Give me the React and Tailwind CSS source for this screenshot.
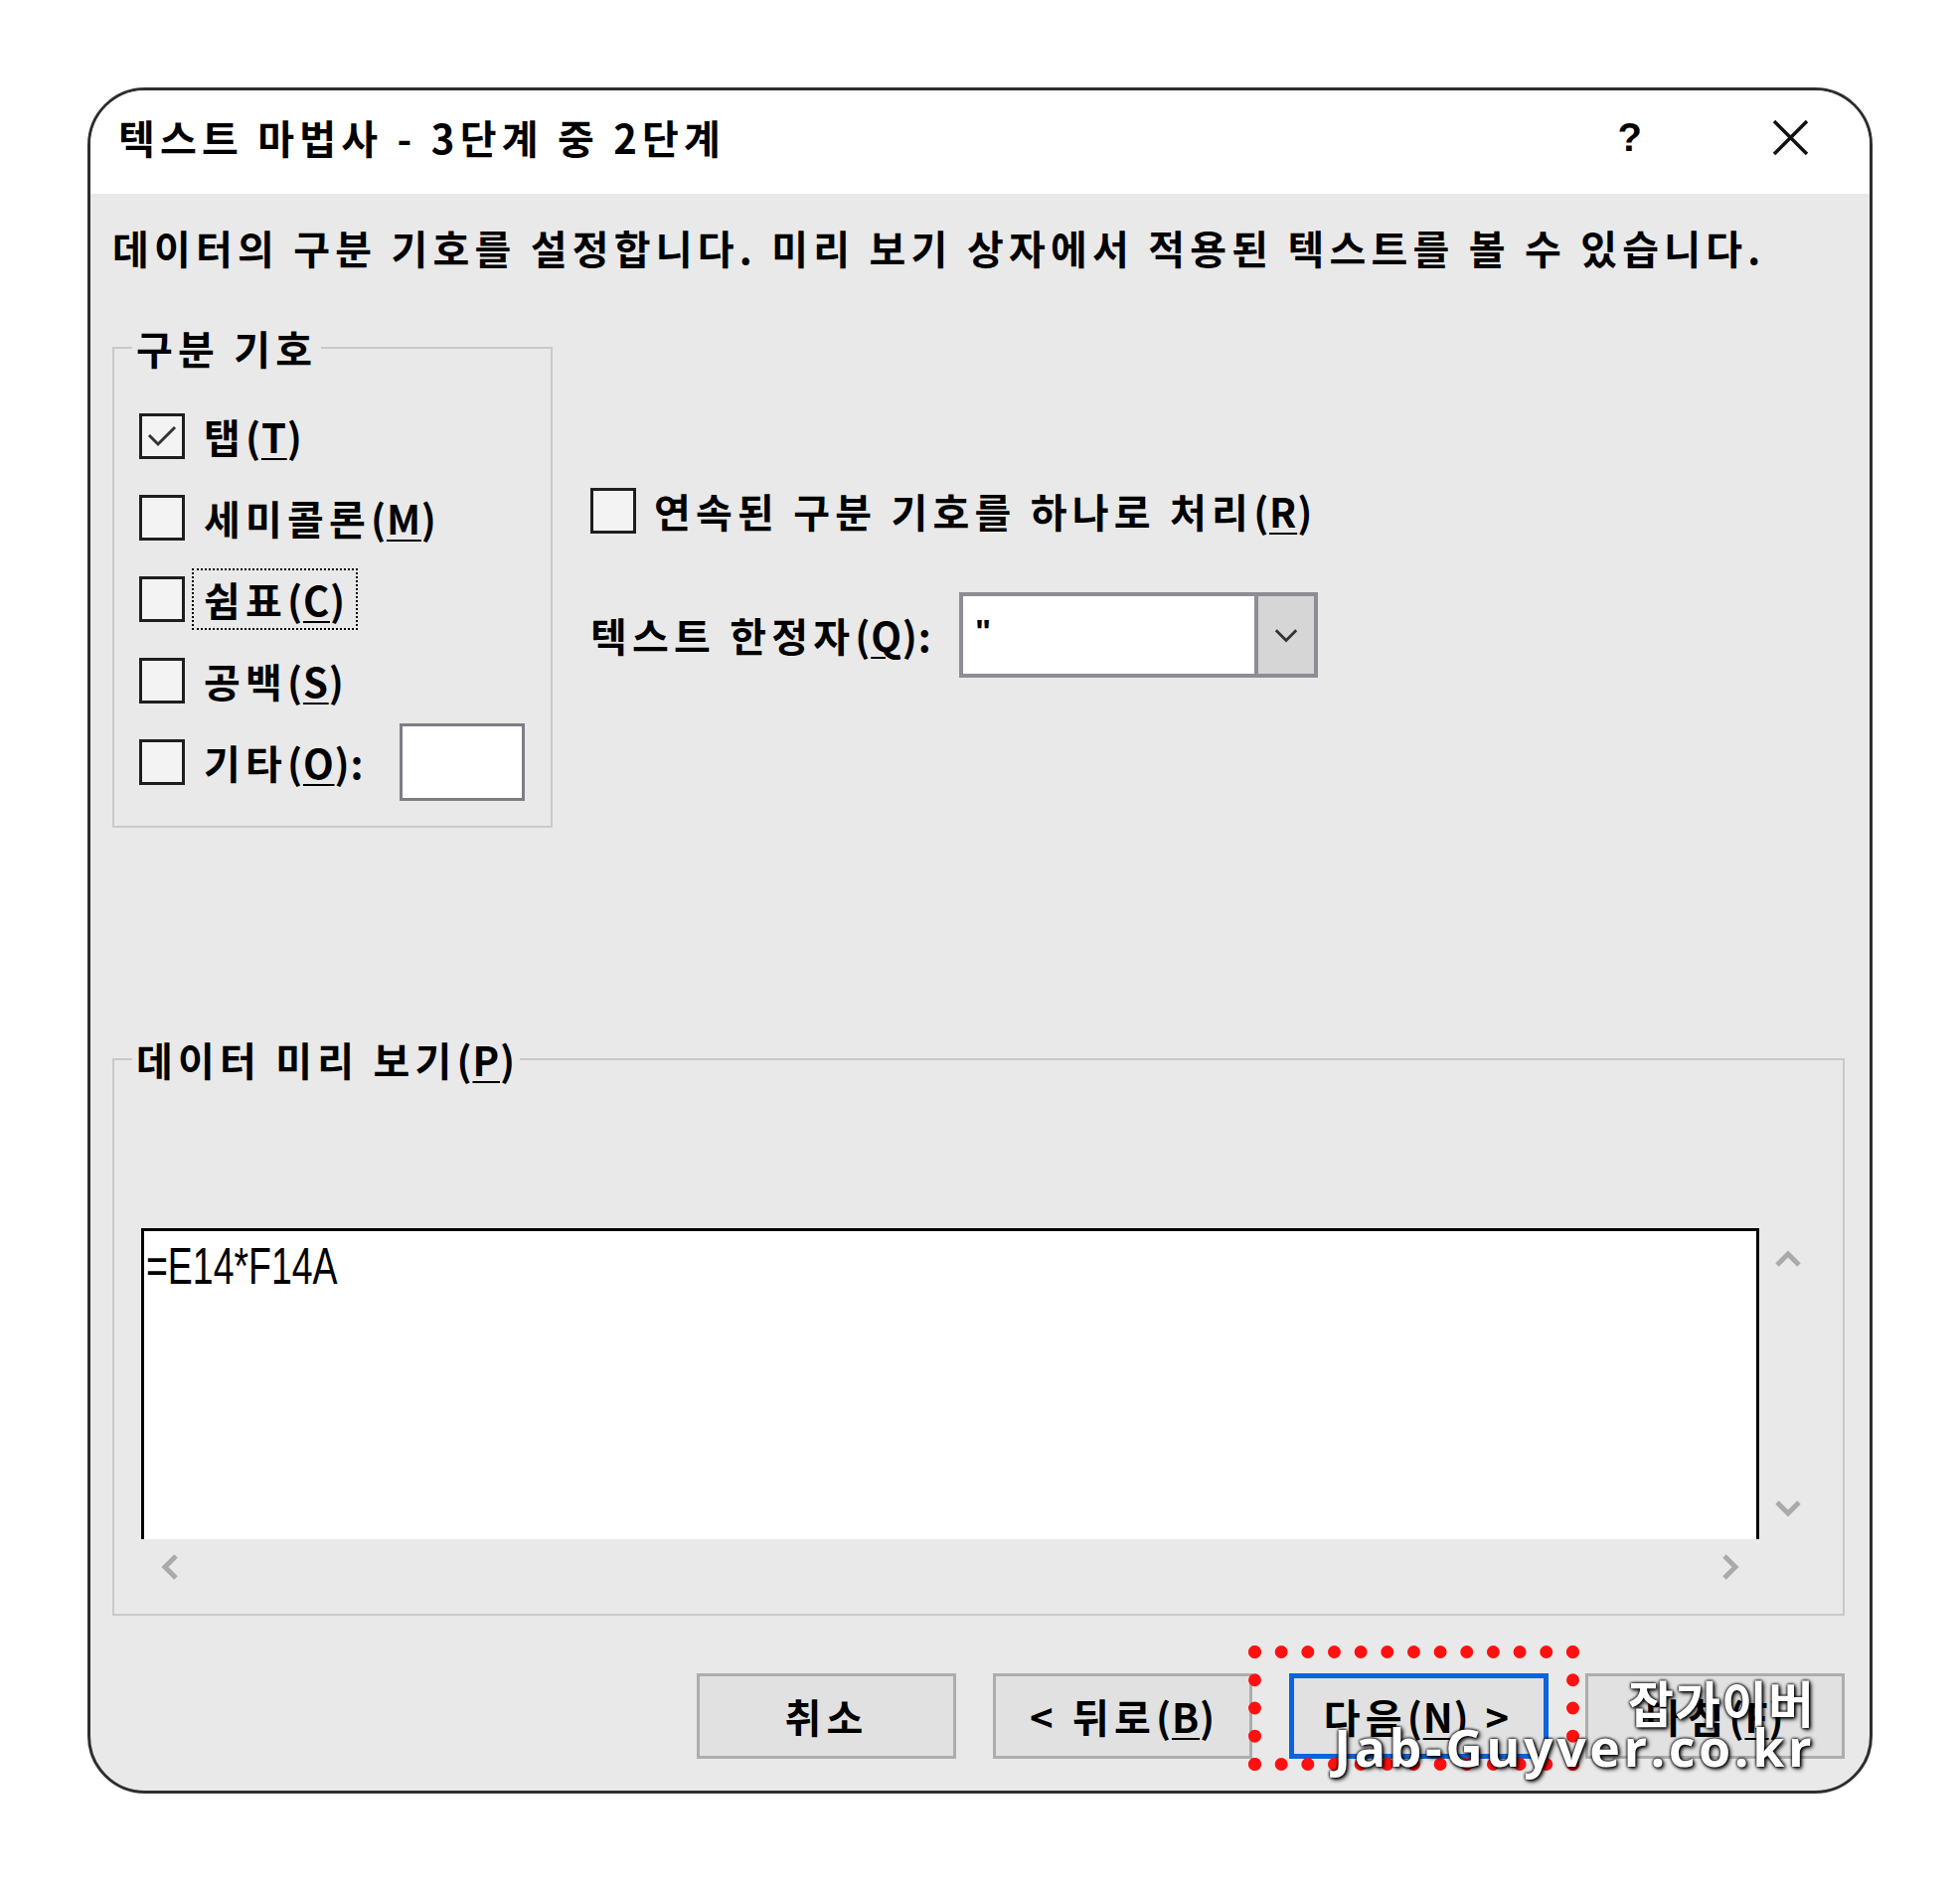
import React from 'react';

const kr = "font-['Noto_Sans_CJK_KR','Noto_Sans',sans-serif]";

function Box({ checked }) {
    return (
        <span className="w-[46px] h-[46px] border-[3px] border-[#1e1e1e] bg-[#f3f3f3] flex items-center justify-center shrink-0">
            {checked && (
                <svg width="32" height="26" viewBox="0 0 32 26">
                    <polyline points="3,12 12,21 29,4" fill="none" stroke="#333" strokeWidth="3" />
                </svg>
            )}
        </span>
    );
}

// (T) 같은 단축키 표시 - 괄호는 좁게
function Key({ children }) {
    return (
        <span className="tracking-[0.02em]">
            (<span className="underline underline-offset-[5px] decoration-2">{children}</span>)
        </span>
    );
}

function Chevron({ dir, color = '#aaaaaa', size = 28, stroke = 5 }) {
    const pts = {
        up: '3,19 14,8 25,19',
        down: '3,9 14,20 25,9',
        left: '19,3 8,14 19,25',
        right: '9,3 20,14 9,25',
    }[dir];
    return (
        <svg width={size} height={size} viewBox="0 0 28 28">
            <polyline points={pts} fill="none" stroke={color} strokeWidth={stroke} />
        </svg>
    );
}

function Btn({ children, active }) {
    return (
        <div className={
            active
                ? "w-[261px] h-[86px] border-[5px] border-[#0a64dc] bg-[#e1e1e1] flex items-center justify-center whitespace-nowrap"
                : "w-[261px] h-[86px] border-[3px] border-[#adadad] bg-[#e1e1e1] flex items-center justify-center whitespace-nowrap"
        }>
            {children}
        </div>
    );
}

export default function App() {
    return (
        <div className={`w-[1972px] h-[1893px] bg-white pt-[88px] pl-[88px] text-black ${kr} text-[40px] tracking-[0.13em] font-bold`}>
            <div className="relative w-[1796px] h-[1717px] rounded-[58px] border-[3px] border-[#2e2e2e] overflow-hidden bg-[#e9e9e9] flex flex-col">
                {/* title bar */}
                <div className="h-[104px] bg-white flex items-center pl-[28px] pr-[61px] pb-[10px] shrink-0">
                    <span className="leading-[48px]">텍스트 마법사 - 3단계 중 2단계</span>
                    <span className="ml-auto font-['Liberation_Sans',sans-serif] font-bold text-[40px] tracking-normal">?</span>
                    <svg className="ml-[131px]" width="37" height="37" viewBox="0 0 37 37">
                        <path d="M2 2 L35 35 M35 2 L2 35" stroke="#111" strokeWidth="3.5" />
                    </svg>
                </div>

                <div className="flex-1 flex flex-col pl-[22px] pr-[25px]">
                    <p className="pt-[30px] leading-[48px]">데이터의 구분 기호를 설정합니다. 미리 보기 상자에서 적용된 텍스트를 볼 수 있습니다.</p>

                    <div className="flex items-start mt-[53px]">
                        <fieldset className="w-[443px] border-2 border-[#c9c9c9] pl-[25px] pr-0 pt-[24px] pb-[23px] whitespace-nowrap">
                            <legend className="ml-[-7px] px-[4px] leading-[48px]">구분 기호</legend>
                            <div className="flex items-center h-[82px] gap-[19px]">
                                <Box checked />
                                <span className="leading-[48px]">탭<Key>T</Key></span>
                            </div>
                            <div className="flex items-center h-[82px] gap-[19px]">
                                <Box />
                                <span className="leading-[48px]">세미콜론<Key>M</Key></span>
                            </div>
                            <div className="flex items-center h-[82px] gap-[7px]">
                                <Box />
                                <span className="leading-[48px] border-2 border-dotted border-black px-[10px] py-[5px]">쉼표<Key>C</Key></span>
                            </div>
                            <div className="flex items-center h-[82px] gap-[19px]">
                                <Box />
                                <span className="leading-[48px]">공백<Key>S</Key></span>
                            </div>
                            <div className="flex items-center h-[82px] gap-[19px]">
                                <Box />
                                <span className="leading-[48px]">기타<Key>O</Key>:</span>
                                <span className="ml-auto mr-[26px] w-[126px] h-[78px] border-[3px] border-[#7d7d85] bg-white" />
                            </div>
                        </fieldset>

                        <div className="ml-[38px] pt-[164px] flex flex-col whitespace-nowrap">
                            <div className="flex items-center gap-[18px]">
                                <Box />
                                <span className="leading-[48px]">연속된 구분 기호를 하나로 처리<Key>R</Key></span>
                            </div>
                            <div className="flex items-center mt-[58px]">
                                <span className="w-[371px] leading-[48px]">텍스트 한정자<Key>Q</Key>:</span>
                                <div className="w-[361px] h-[86px] border-[4px] border-[#8d8d95] bg-white flex">
                                    <span className="flex-1 pl-[12px] pt-[10px] font-['Liberation_Sans',sans-serif] text-[34px] font-bold tracking-normal">"</span>
                                    <span className="w-[60px] border-l-[4px] border-[#8d8d95] bg-[#d6d6d6] flex items-center justify-center">
                                        <Chevron dir="down" color="#333" size={26} stroke={3} />
                                    </span>
                                </div>
                            </div>
                        </div>
                    </div>

                    <fieldset className="mt-[209px] border-2 border-[#c9c9c9] pl-[27px] pr-0 pt-[146px] pb-0">
                        <legend className="ml-[-9px] px-[4px] leading-[48px]">데이터 미리 보기<Key>P</Key></legend>
                        <div className="flex">
                            <div className="w-[1628px] flex flex-col">
                                <div className="h-[313px] border-[3px] border-b-0 border-black bg-white pl-[2px] pt-[6px]">
                                    <span className="inline-block origin-left scale-x-[0.72] font-['Liberation_Sans',sans-serif] text-[52px] leading-[52px] tracking-normal font-normal">=E14*F14A</span>
                                </div>
                                <div className="h-[56px] flex items-center justify-between px-[16px]">
                                    <Chevron dir="left" />
                                    <Chevron dir="right" />
                                </div>
                            </div>
                            <div className="w-[58px] h-[313px] flex flex-col items-center justify-between py-[18px]">
                                <Chevron dir="up" />
                                <Chevron dir="down" />
                            </div>
                        </div>
                        <div className="h-[19px]" />
                    </fieldset>

                    <div className="mt-[58px] flex justify-end gap-[37px]">
                        <Btn>취소</Btn>
                        <Btn>&lt; 뒤로<Key>B</Key></Btn>
                        <Btn active>다음<Key>N</Key><span className="ml-[16px]">&gt;</span></Btn>
                        <Btn>마침<Key>F</Key></Btn>
                    </div>
                </div>

                {/* red dotted highlight */}
                <div className="absolute left-[1165px] top-[1565px] w-[333px] h-[126px] border-[13px] border-dotted border-[#ff1010]" />

                {/* watermark */}
                <div className="absolute right-[55px] top-[1598px] flex flex-col items-end text-white font-bold [text-shadow:0_0_3px_#000,0_0_3px_#000,2px_2px_4px_#000]">
                    <span className="text-[50px] leading-[46px] tracking-[0.02em]">잡가이버</span>
                    <span className="font-['Open_Sans',sans-serif] text-[52px] leading-[46px] tracking-[3.5px]">Jab-Guyver.co.kr</span>
                </div>
            </div>
        </div>
    );
}
